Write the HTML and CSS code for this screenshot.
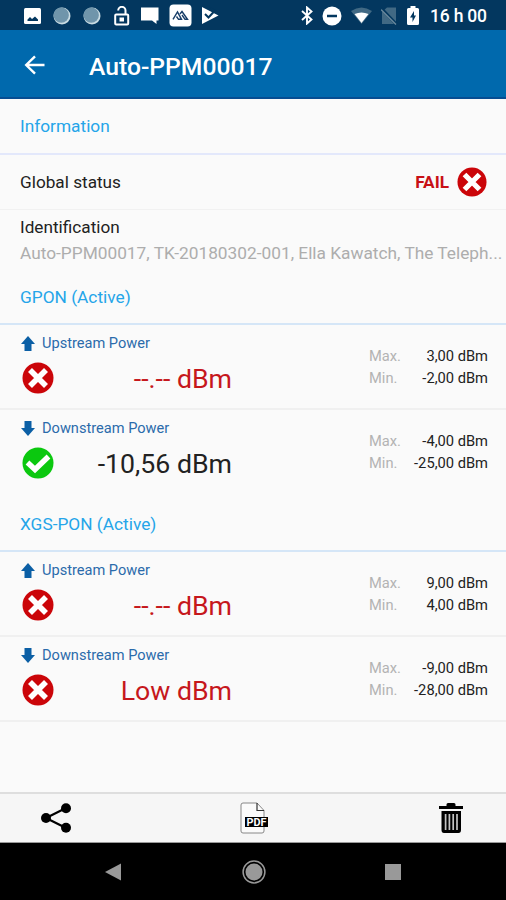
FILE: index.html
```html
<!DOCTYPE html>
<html lang="fr">
<head>
<meta charset="utf-8">
<title>Auto-PPM00017</title>
<link rel="stylesheet" href="styles.css">
</head>
<body>
<svg class="defs" width="0" height="0">
  <symbol id="fail" viewBox="0 0 32 32"><circle cx="16" cy="16" r="15.5" fill="#cb0509"/><path d="M8 8 24 24M24 8 8 24" stroke="#fff" stroke-width="5.6" fill="none"/></symbol>
  <symbol id="pass" viewBox="0 0 32 32"><circle cx="16" cy="16" r="15.5" fill="#0bc80f"/><path d="M5.500 15.500 13 22.500 26.500 9.500" stroke="#fff" stroke-width="5.4" fill="none"/></symbol>
  <symbol id="up" viewBox="0 0 14 15"><path d="M7 0 14 8H10.500V15H3.500V8H0Z" fill="#0b5fa5"/></symbol>
  <symbol id="down" viewBox="0 0 14 15"><path d="M7 15 14 7H10.500V0H3.500V7H0Z" fill="#0b5fa5"/></symbol>
</svg>
<div class="screen">
  <div class="status">
    <div class="notes">
      <svg width="18" height="16" viewBox="0 0 18 16"><rect width="17" height="16" rx="1.500" fill="#fff"/><path d="M3.500 13V11.500L6 9 8 11 11 8.500 14 11.500V13Z" fill="#03375f"/></svg>
      <svg width="18" height="18" viewBox="0 0 18 18"><circle cx="9" cy="9" r="8.500" fill="#c9dbe2"/><circle cx="8.200" cy="8.100" r="7.700" fill="#7095ab"/></svg>
      <svg width="18" height="18" viewBox="0 0 18 18"><circle cx="9" cy="9" r="8.500" fill="#c9dbe2"/><circle cx="8.200" cy="8.100" r="7.700" fill="#7095ab"/></svg>
      <svg width="16" height="20" viewBox="0 0 16 20"><path d="M4.200 4.500a3.500 3.500 0 0 1 7.300 0V8" fill="none" stroke="#fff" stroke-width="2"/><rect x="1.200" y="8.500" width="13" height="10" rx="1" fill="none" stroke="#fff" stroke-width="2"/><rect x="5.500" y="11.500" width="4.500" height="4" fill="#fff"/></svg>
      <svg width="19" height="17" viewBox="0 0 19 17"><path d="M1 .5H18.500V13.500H16.500V17L12 13.500H1Z" fill="#fff"/></svg>
      <svg width="23" height="23" viewBox="0 0 23 23"><rect x=".5" y=".5" width="22" height="22" rx="4" fill="#fff"/><path d="M4 15.300 8.500 8 12.500 15.300H9.500L7.500 12.500M11 10 13 7.500 18.500 15.300H16L13 11" fill="none" stroke="#173d68" stroke-width="1.400"/></svg>
      <svg width="18" height="18" viewBox="0 0 18 18"><path d="M1 0 17.500 8.500 1 17Z" fill="#fff"/><path d="M4 7 7.500 10.500 14 3.500" fill="none" stroke="#03375f" stroke-width="2"/><path d="M9 1.500 15 5" stroke="#03375f" stroke-width="3"/></svg>
    </div>
    <div class="system">
      <svg width="12" height="19" viewBox="0 0 12 19"><path d="M1 5 10.500 13.500 6 17.500V1.500L10.500 5.500 1 14" fill="none" stroke="#fff" stroke-width="1.900"/></svg>
      <svg width="20" height="20" viewBox="0 0 20 20"><circle cx="10" cy="10" r="9.500" fill="#fff"/><path d="M5 10H15" stroke="#03375f" stroke-width="2.500"/></svg>
      <svg width="21" height="17" viewBox="0 0 21 17"><path d="M0 4Q10.500-3 21 4L10.500 17Z" fill="#416984"/><path d="M3.500 7Q10.500 4 17.500 7L10.500 16Z" fill="#fff"/></svg>
      <svg width="17" height="18" viewBox="0 0 17 18"><path d="M1 5 6 .5H15V17H1Z" fill="#416984"/><path d="M0 1 16 18" stroke="#03375f" stroke-width="3"/><path d="M0 2.500 15 17.500" stroke="#6d8b9f" stroke-width="1.300"/></svg>
      <svg width="12" height="19" viewBox="0 0 12 19"><path d="M3.500 0H8.500V2H10.500Q12 2 12 3.500V17.500Q12 19 10.500 19H1.500Q0 19 0 17.500V3.500Q0 2 1.500 2H3.500Z" fill="#fff"/><path d="M7 5 3 11.500H5.500V16L9 9.500H7Z" fill="#03375f"/></svg>
      <span class="clock">16 h 00</span>
    </div>
  </div>
  <header class="appbar">
    <svg width="21" height="20" viewBox="0 0 21 20"><path d="M20.500 10H2.500M11 1.300 2.200 10 11 18.700" fill="none" stroke="#fff" stroke-width="2.400"/></svg>
    <h1><span>Auto-PPM00017</span></h1>
  </header>
  <main>
    <h2 class="first"><span>Information</span></h2>
    <div class="global"><span>Global status</span><b>FAIL</b><svg width="30" height="30"><use href="#fail"/></svg></div>
    <div class="ident"><div>Identification</div><p>Auto-PPM00017, TK-20180302-001, Ella Kawatch, The Teleph...</p></div>
    <h2 class="gpon"><span>GPON (Active)</span></h2>
    <section class="row">
      <div class="reading"><div class="cap"><svg width="14" height="15"><use href="#up"/></svg><span>Upstream Power</span></div><div class="val bad"><svg width="32" height="32"><use href="#fail"/></svg><span>--.-- dBm</span></div></div>
      <dl><dt>Max.</dt><dd>3,00 dBm</dd><dt>Min.</dt><dd>-2,00 dBm</dd></dl>
    </section>
    <section class="row last">
      <div class="reading"><div class="cap"><svg width="14" height="15"><use href="#down"/></svg><span>Downstream Power</span></div><div class="val"><svg width="32" height="32"><use href="#pass"/></svg><span>-10,56 dBm</span></div></div>
      <dl><dt>Max.</dt><dd>-4,00 dBm</dd><dt>Min.</dt><dd>-25,00 dBm</dd></dl>
    </section>
    <h2 class="xgs"><span>XGS-PON (Active)</span></h2>
    <section class="row">
      <div class="reading"><div class="cap"><svg width="14" height="15"><use href="#up"/></svg><span>Upstream Power</span></div><div class="val bad"><svg width="32" height="32"><use href="#fail"/></svg><span>--.-- dBm</span></div></div>
      <dl><dt>Max.</dt><dd>9,00 dBm</dd><dt>Min.</dt><dd>4,00 dBm</dd></dl>
    </section>
    <section class="row">
      <div class="reading"><div class="cap"><svg width="14" height="15"><use href="#down"/></svg><span>Downstream Power</span></div><div class="val bad"><svg width="32" height="32"><use href="#fail"/></svg><span>Low dBm</span></div></div>
      <dl><dt>Max.</dt><dd>-9,00 dBm</dd><dt>Min.</dt><dd>-28,00 dBm</dd></dl>
    </section>
  </main>
  <footer class="tools">
    <svg width="30" height="30" viewBox="0 0 30 30"><path d="M25 5 5 15 25 25" fill="none" stroke="#000" stroke-width="2.200"/><circle cx="5" cy="15" r="5"/><circle cx="25" cy="5.200" r="5"/><circle cx="25" cy="24.800" r="5"/></svg>
    <svg class="doc" width="28" height="32" viewBox="0 0 28 32"><path d="M3 1H17L24 8.500V29Q24 31 22 31H3Q1 31 1 29V3Q1 1 3 1Z" fill="#fbfbfb" stroke="#888" stroke-width="1"/><path d="M17 1V8.500H24" fill="none" stroke="#333" stroke-width="1.200"/><rect x="5" y="15" width="23" height="10" fill="#000"/><text x="6.500" y="23.700" class="pdf" textLength="20" lengthAdjust="spacingAndGlyphs">PDF</text></svg>
    <svg width="26" height="30" viewBox="0 0 26 30"><path d="M8.500 3V1.500Q8.500 0 10 0H16Q17.500 0 17.500 1.500V3H25V6H1V3ZM3.500 8H23V27Q23 30 20.500 30H6Q3.500 30 3.500 27Z"/><path d="M7.600 11V27M11.400 11V27M15.200 11V27M19 11V27" stroke="#c4c4c4" stroke-width="1.700"/></svg>
  </footer>
  <nav>
    <svg width="17" height="18" viewBox="0 0 17 18"><path d="M0 9 16 .5V17.500Z" fill="#999"/></svg>
    <svg width="24" height="24" viewBox="0 0 24 24"><circle cx="12" cy="12" r="10.900" fill="none" stroke="#999" stroke-width="1.500"/><circle cx="12" cy="12" r="8.500" fill="#999"/></svg>
    <svg width="16" height="16"><rect width="16" height="16" fill="#999"/></svg>
  </nav>
</div>
</body>
</html>
```
FILE: styles.css
```css
* { box-sizing: border-box; }
body { margin: 0; font-family: Roboto, "Liberation Sans", sans-serif; color: #222; }
svg { display: block; flex: none; }
.defs { position: absolute; }
h1, h2, p, dl, dd { margin: 0; font-weight: 400; }
.screen { width: 506px; height: 900px; display: flex; flex-direction: column; background: #fafafa; overflow: hidden; }
.status { height: 30px; flex: none; background: #03375f; display: flex; justify-content: space-between; padding: 1px 19px 0 24px; }
.notes, .system { display: flex; align-items: center; }
.notes { gap: 12px; }
.notes svg:nth-child(2), .notes svg:nth-child(3) { margin-left: -1px; margin-right: 1px; }
.notes svg:nth-child(5) { margin-left: -2px; }
.notes svg:nth-child(6) { margin-left: -2px; }
.notes svg:nth-child(7) { margin-left: -3px; }
.system { gap: 9px; }
.system svg:nth-child(5) { margin-right: 2px; }
.clock { font-size: 17.500px; font-weight: 500; letter-spacing: -0.2px; width: 57px; color: #fff; white-space: nowrap; }
.appbar { height: 69px; flex: none; background: #0069ad; border-bottom: 2px solid #064d92; display: flex; align-items: center; padding: 2px 0 0 24px; gap: 44px; }
.appbar h1 { font-size: 24.700px; font-weight: 500; color: #fff; padding-top: 3px; }
main { flex: 1; min-height: 0; }
h2 { font-size: 17.300px; color: #25a5e9; padding-left: 20px; display: flex; align-items: center; border-bottom: 2px solid #d5e6f7; }
.first { height: 56px; border-color: #e3e8fb; }
.gpon { height: 56px; padding-top: 1px; }
.xgs { height: 57px; padding-top: 2px; }
.global { height: 55px; display: flex; align-items: center; padding: 0 19px 0 20px; border-bottom: 1px solid #f1f1f1; font-size: 17.200px; }
.global b { margin-left: auto; margin-right: 8px; color: #c81015; font-weight: 700; }
.ident { height: 59px; padding: 6px 0 0 20px; font-size: 17.200px; line-height: 22px; }
.ident p { font-size: 17.300px; color: #adadad; line-height: 31px; white-space: nowrap; }
.row { height: 85px; display: flex; justify-content: space-between; padding: 8px 18px 0 21px; border-bottom: 2px solid #f0f0f0; }
.last { border-bottom-color: transparent; }
.reading { width: 211px; }
.cap { display: flex; align-items: center; gap: 7px; height: 20px; font-size: 14.600px; color: #2b6bab; }
.val { display: flex; align-items: center; justify-content: space-between; height: 32px; margin: 9px 0 0 1px; font-size: 26.700px; }
.val span { padding-top: 2px; }
.val.bad { color: #c6171c; }
dl { width: 119px; display: grid; grid-template-columns: auto 1fr; align-content: start; padding-top: 13px; line-height: 21.500px; font-size: 14.700px; }
dt { color: #b3b3b3; }
dd { text-align: right; }
.tools { height: 51px; flex: none; background: #f6f6f6; border-top: 2px solid #dedede; border-bottom: 1px solid #999; display: flex; align-items: center; justify-content: space-between; padding: 0 42px 0 41px; }
.doc { margin-right: 2px; }
.pdf { font: 700 10px Roboto, sans-serif; fill: #fff; }
nav { height: 57px; flex: none; background: #000; display: flex; align-items: center; justify-content: space-between; padding: 0 105px; }
```
